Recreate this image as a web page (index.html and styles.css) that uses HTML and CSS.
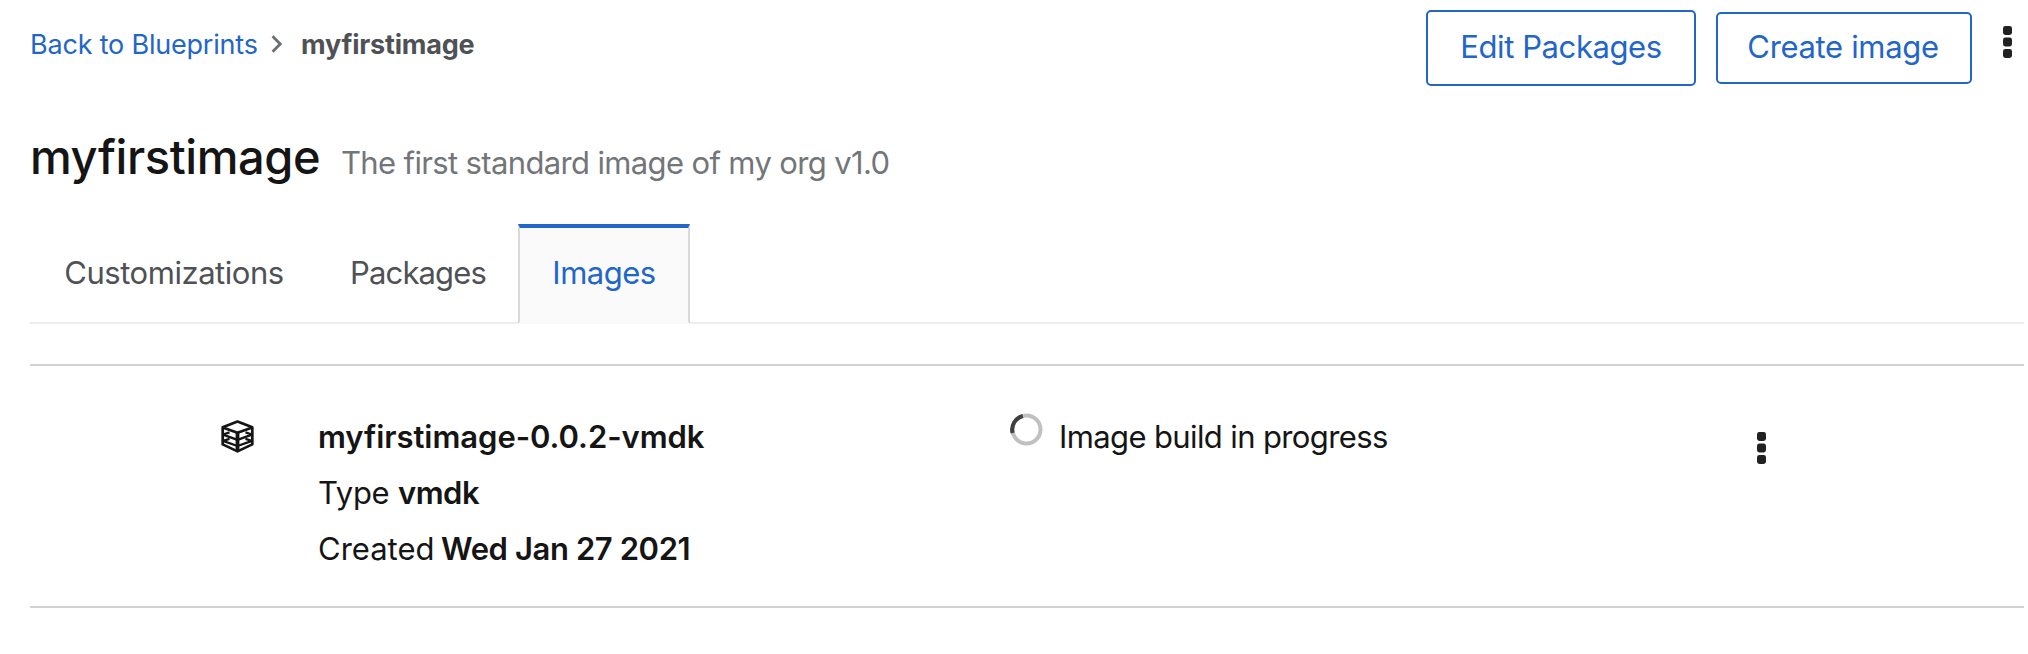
FILE: index.html
```html
<!DOCTYPE html>
<html lang="en">
<head>
<meta charset="utf-8">
<title>myfirstimage</title>
<link rel="stylesheet" href="styles.css">
</head>
<body>
<header class="toolbar">
  <nav class="breadcrumb">
    <a class="crumb-link" href="#">Back to Blueprints</a>
    <svg class="chevron" width="12" height="18" viewBox="0 0 12 18"><path d="M1.6 1.2L9.2 9L1.6 16.8" fill="none" stroke="#6a6e73" stroke-width="2.8"/></svg>
    <span class="crumb-current">myfirstimage</span>
  </nav>
  <div class="actions">
    <button class="btn btn-edit">Edit Packages</button>
    <button class="btn btn-create">Create image</button>
    <svg class="kebab" width="9" height="32" viewBox="0 0 9 32" fill="#212121"><rect width="9" height="9" y="0" rx="2.4"/><rect width="9" height="9" y="11.5" rx="2.4"/><rect width="9" height="9" y="23" rx="2.4"/></svg>
  </div>
</header>
<div class="heading">
  <h1 class="title">myfirstimage</h1>
  <p class="subtitle">The first standard image of my org v1.0</p>
</div>
<nav class="tabs">
  <a class="tab tab-custom">Customizations</a>
  <a class="tab tab-packages">Packages</a>
  <a class="tab tab-images active">Images</a>
</nav>
<main class="list">
  <article class="row">
    <svg class="cube" width="33" height="33" viewBox="0 0 33 33" fill="none" stroke="#151515" stroke-width="2.7" stroke-linejoin="round"><path d="M16.5 1.5L31.3 7.2V24.4L16.5 31.4L1.7 24.4V7.2Z"/><path d="M1.7 7.4L16.5 12.8L31.3 7.4"/><path d="M8.5 12.4L2 14.6L16.5 19.8L31 14.6L24.5 12.4M8.5 18.8L2 20.8L16.5 26L31 20.8L24.5 18.8" stroke-width="2.3"/><path d="M16.5 12.5V31" stroke-width="3.8"/></svg>
    <div class="details">
      <div class="name">myfirstimage-0.0.2-vmdk</div>
      <div class="meta"><span class="type-label">Type</span><strong class="type-value">vmdk</strong></div>
      <div class="meta"><span class="date-label">Created</span><strong class="date-value">Wed Jan 27 2021</strong></div>
    </div>
    <div class="status">
      <svg class="spinner" width="33" height="33" viewBox="0 0 33 33" fill="none" stroke-width="4"><circle cx="16.5" cy="16.5" r="14" stroke="#c0c0c0"/><path d="M2.6 20.1A14 14 0 0 1 12.8 3" stroke="#3f3f3f"/></svg>
      <span class="status-text">Image build in progress</span>
    </div>
    <svg class="kebab row-kebab" width="9" height="32" viewBox="0 0 9 32" fill="#212121"><rect width="9" height="9" y="0" rx="2.4"/><rect width="9" height="9" y="11.5" rx="2.4"/><rect width="9" height="9" y="23" rx="2.4"/></svg>
  </article>
</main>
</body>
</html>
```
FILE: styles.css
```css
* { box-sizing: border-box; }
body {
  margin: 0;
  padding: 0 4px 0 30px;
  background: #fff;
  color: #151515;
  font-family: Inter, "Liberation Sans", sans-serif;
  font-size: 31px;
  line-height: 40px;
}
svg { display: block; flex: none; }
.toolbar { display: flex; justify-content: space-between; height: 127px; }
.breadcrumb { display: flex; height: 40px; margin-top: 25px; font-size: 27px; white-space: nowrap; }
.crumb-link { width: 241px; color: #2266c9; text-decoration: none; letter-spacing: -0.2px; }
.chevron { margin-top: 10px; }
.crumb-current { margin-left: 18px; color: #4f5255; font-weight: 700; letter-spacing: -0.2px; }
.actions { display: flex; align-items: flex-start; padding-right: 12px; }
.btn {
  padding: 0 0 2px;
  border: 2px solid #2266c9;
  border-radius: 5px;
  background: #fff;
  color: #2266c9;
  font: inherit;
  white-space: nowrap;
}
.btn-edit { width: 270px; height: 76px; margin: 10px 20px 0 0; letter-spacing: -0.41px; }
.btn-create { width: 256px; height: 72px; margin: 12px 31px 0 0; padding-right: 2px; letter-spacing: -0.34px; }
.kebab { margin-top: 26px; }
.heading { display: flex; align-items: baseline; height: 97px; white-space: nowrap; }
.title { width: 311px; margin: 0; font-size: 47px; font-weight: 500; line-height: 60px; letter-spacing: -0.4px; }
.subtitle { margin: 0; color: #737679; letter-spacing: -0.64px; }
.tabs { display: flex; height: 100px; border-bottom: 2px solid #ededed; }
.tab { height: 100px; padding-top: 29px; color: #4f5255; text-align: center; }
.tab-custom { width: 288px; letter-spacing: -0.46px; }
.tab-packages { width: 200px; letter-spacing: -0.86px; }
.tab-images { width: 172px; letter-spacing: -0.5px; }
.tab.active {
  padding-top: 25px;
  border: 2px solid #dadada;
  border-top: 4px solid #2266c9;
  border-bottom-color: #fafafa;
  background: #fafafa;
  color: #2266c9;
}
.list { margin-top: 40px; border-top: 2px solid #d2d2d2; border-bottom: 2px solid #d2d2d2; }
.row {
  display: grid;
  grid-template-columns: 97px 692px 746px auto;
  justify-content: start;
  height: 240px;
  padding: 43px 0 0 191px;
  line-height: 56px;
  white-space: nowrap;
}
.cube { margin-top: 11px; }
.name { font-weight: 600; letter-spacing: -0.05px; }
.meta { display: flex; }
.meta strong { font-weight: 600; }
.type-label { width: 80px; letter-spacing: -0.3px; }
.type-value { letter-spacing: -0.5px; }
.date-label { width: 123px; }
.date-value { letter-spacing: -0.4px; }
.status { display: flex; }
.spinner { margin-top: 4px; }
.status-text { margin-left: 16px; letter-spacing: -0.62px; }
.row-kebab { margin: 23px 0 0 1px; }
```
